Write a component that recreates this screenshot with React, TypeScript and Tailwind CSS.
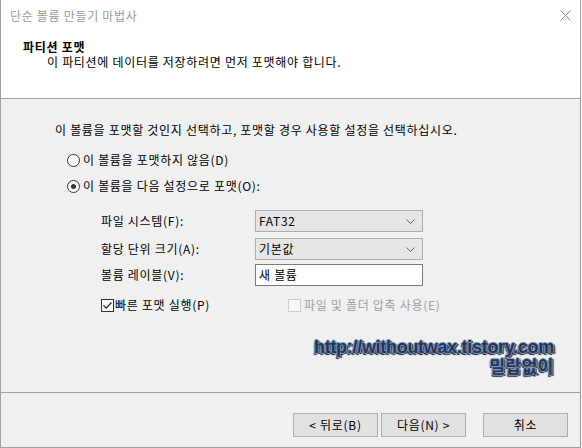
import React from "react";

function Radio({ checked }: { checked?: boolean }) {
  return (
    <span className="w-[13px] h-[13px] rounded-full border border-[#333333] bg-white flex items-center justify-center shrink-0">
      {checked && <span className="w-[5px] h-[5px] rounded-full bg-[#333333]" />}
    </span>
  );
}

function Combo({ value }: { value: string }) {
  return (
    <div className="w-[168px] h-[22px] bg-[#e5e5e5] border border-[#adadad] flex items-center justify-between pl-[3px] pr-[7px]">
      <span>{value}</span>
      <svg width="9" height="5" viewBox="0 0 9 5" fill="none">
        <path d="M0.5 0.5 L4.5 4.5 L8.5 0.5" stroke="#606060" strokeWidth="1" />
      </svg>
    </div>
  );
}

function Button({ label }: { label: string }) {
  return (
    <button className="w-[85px] h-[24px] bg-[#e1e1e1] border border-[#adadad] flex items-center justify-center text-[12px] text-black">
      {label}
    </button>
  );
}

export default function App() {
  return (
    <div className="w-[582px] h-[448px] bg-[#f0f0f0] [font-family:'Noto_Sans_CJK_KR','Liberation_Sans',sans-serif] text-[12px] leading-[16px] tracking-[0.7px] text-black">
      <div className="relative w-[581px] h-[448px] flex flex-col border-l border-r border-b border-[#a0a0a0]">
        {/* header */}
        <div className="bg-white h-[99px] border-b border-[#a0a0a0] shrink-0">
          <div className="h-[31px] flex items-center justify-between pl-[9px] pr-[9px] text-[#9a9a9a]">
            <span>단순 볼륨 만들기 마법사</span>
            <svg width="11" height="11" viewBox="0 0 11 11">
              <path d="M0.5 0.5 L10.5 10.5 M10.5 0.5 L0.5 10.5" stroke="#8a8a8a" strokeWidth="1" />
            </svg>
          </div>
          <div className="pl-[22px] pt-[8px] font-bold leading-[15px]">파티션 포맷</div>
          <div className="pl-[46px] leading-[15px]">이 파티션에 데이터를 저장하려면 먼저 포맷해야 합니다.</div>
        </div>

        {/* body */}
        <div className="flex-1 pt-[23px] pl-[54px]">
          <div>이 볼륨을 포맷할 것인지 선택하고, 포맷할 경우 사용할 설정을 선택하십시오.</div>
          <div className="mt-[14px] pl-[12px] flex flex-col gap-[10px]">
            <label className="flex items-center gap-[3px]">
              <Radio />
              <span>이 볼륨을 포맷하지 않음(D)</span>
            </label>
            <label className="flex items-center gap-[3px]">
              <Radio checked />
              <span>이 볼륨을 다음 설정으로 포맷(O):</span>
            </label>
          </div>

          <div className="mt-[16px] pl-[46px] grid grid-cols-[154px_168px] items-center">
            <span>파일 시스템(F):</span>
            <Combo value="FAT32" />
            <span className="mt-[6px]">할당 단위 크기(A):</span>
            <div className="mt-[6px]">
              <Combo value="기본값" />
            </div>
            <span className="mt-[4px]">볼륨 레이블(V):</span>
            <div className="mt-[4px] w-[168px] h-[22px] bg-white border border-[#7a7a7a] flex items-center pl-[3px]">
              새 볼륨
            </div>
          </div>

          <div className="mt-[11px] pl-[46px] flex items-center">
            <label className="w-[187px] flex items-center gap-[1px]">
              <span className="w-[13px] h-[13px] border border-[#333333] bg-white flex items-center justify-center">
                <svg width="11" height="11" viewBox="0 0 11 11" fill="none">
                  <path d="M1.5 5.5 L4.2 8.2 L9.5 2.5" stroke="#222222" strokeWidth="1.2" />
                </svg>
              </span>
              <span>빠른 포맷 실행(P)</span>
            </label>
            <label className="flex items-center gap-[3px] text-[#a0a0a0]">
              <span className="w-[13px] h-[13px] border border-[#cccccc] bg-[#f7f7f7]" />
              <span>파일 및 폴더 압축 사용(E)</span>
            </label>
          </div>
        </div>

        {/* watermark */}
        <div className="absolute left-[290px] top-[337px] w-[263px] flex flex-col items-end font-bold tracking-normal text-[#24355a] [text-shadow:1px_0_0_#8198bb,-1px_0_0_#8198bb,0_1px_0_#8198bb,0_-1px_0_#8198bb,2px_1px_1px_#1a2335,-1px_2px_1px_#1a2335]">
          <span className="[font-family:'Liberation_Sans',sans-serif] text-[18px] leading-[20px] tracking-[-0.3px]">
            http://withoutwax.tistory.com
          </span>
          <span className="text-[17px] leading-[18px] tracking-[0.5px]">밀랍없이</span>
        </div>

        {/* footer */}
        <div className="h-[55px] border-t border-[#a0a0a0] shrink-0 flex justify-end items-start pt-[20px] pr-[12px]">
          <Button label="< 뒤로(B)" />
          <div className="ml-[3px]">
            <Button label="다음(N) >" />
          </div>
          <div className="ml-[17px]">
            <Button label="취소" />
          </div>
        </div>
      </div>
    </div>
  );
}
